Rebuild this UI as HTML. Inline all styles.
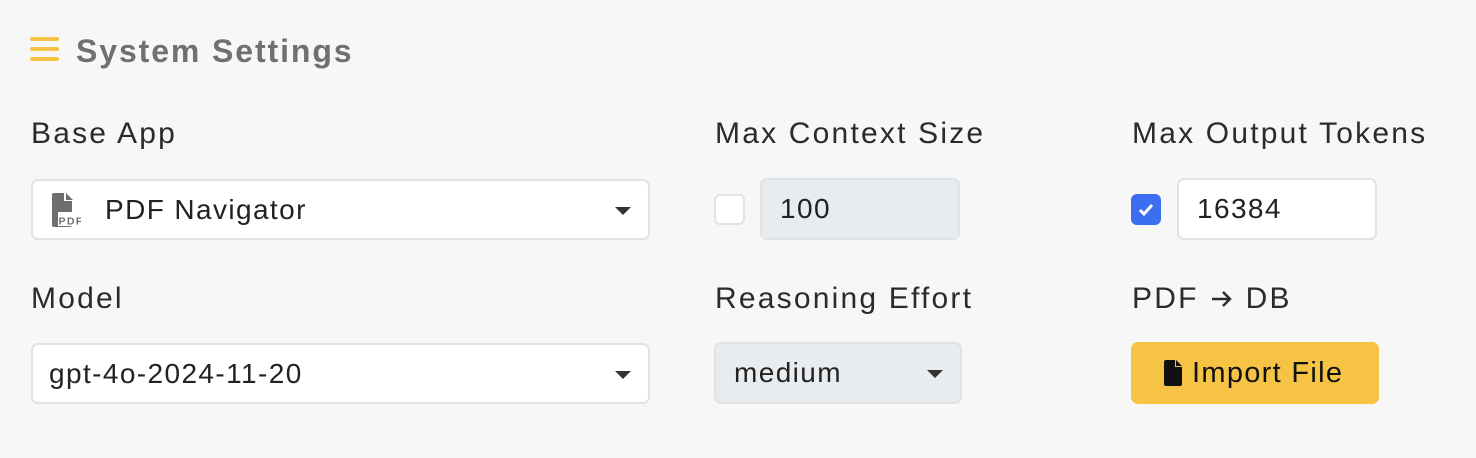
<!DOCTYPE html>
<html><head><meta charset="utf-8"><style>
body{margin:0;width:1476px;height:458px;background:#f7f7f7;font-family:"Liberation Sans",sans-serif;color:#222;position:relative;overflow:hidden}
.a{position:absolute}
.lbl{font-size:30px;letter-spacing:2.2px;color:#2b2b2b;line-height:1}
.box{position:absolute;box-sizing:border-box;border:2px solid #dfe2e6;border-radius:7px;background:#fff;font-size:28px;letter-spacing:1.4px;display:flex;align-items:center}
.caret{position:absolute;right:17px;top:26px;width:0;height:0;border-left:8px solid transparent;border-right:8px solid transparent;border-top:8px solid #333}
</style></head><body>
<svg class="a" style="left:30px;top:37px" width="29" height="26"><rect x="0" y="0" width="29" height="4" rx="2" fill="#f6c344"/><rect x="0" y="10" width="29" height="4" rx="2" fill="#f6c344"/><rect x="0" y="20" width="29" height="4" rx="2" fill="#f6c344"/></svg>
<div class="a" style="left:76px;top:33px;font-size:32px;font-weight:bold;color:#707070;letter-spacing:1.9px">System Settings</div>

<div class="a lbl" style="left:31px;top:119px">Base App</div>
<div class="a lbl" style="left:715px;top:119px">Max Context Size</div>
<div class="a lbl" style="left:1132px;top:119px">Max Output Tokens</div>

<div class="box" style="left:31px;top:179px;width:619px;height:61px">
<svg class="a" style="left:18px;top:12px" width="30" height="34"><path d="M3 0h10v8h8v24a2 2 0 0 1-2 2H3a2 2 0 0 1-2-2V2a2 2 0 0 1 2-2z" fill="#6e6e6e"/><path d="M15 0l7 7h-7z" fill="#6e6e6e"/><rect x="7" y="19" width="23" height="14" fill="#fff"/><text x="7.5" y="31.5" font-size="10.5" font-family="Liberation Sans" font-weight="bold" fill="#6e6e6e">PDF</text></svg>
<span style="margin-left:72px">PDF Navigator</span><div class="caret"></div></div>

<div class="box" style="left:714px;top:194px;width:31px;height:31px;border-radius:6px"></div>
<div class="box" style="left:760px;top:178px;width:200px;height:62px;background:#e9ecef"><span style="margin-left:18px">100</span></div>

<div class="a" style="left:1131px;top:194px;width:30px;height:31px;background:#3b6ff0;border-radius:6px"><svg width="30" height="31"><path d="M9 16l4 4 8-9" stroke="#fff" stroke-width="3" fill="none"/></svg></div>
<div class="box" style="left:1177px;top:178px;width:200px;height:62px"><span style="margin-left:18px">16384</span></div>

<div class="a lbl" style="left:31px;top:284px">Model</div>
<div class="a lbl" style="left:715px;top:284px">Reasoning Effort</div>
<div class="a lbl" style="left:1132px;top:284px">PDF <svg width="26" height="22" style="vertical-align:-1px"><path d="M3 12h18M14 5l7 7-7 7" stroke="#2b2b2b" stroke-width="2.5" fill="none"/></svg> DB</div>

<div class="box" style="left:31px;top:343px;width:619px;height:61px"><span style="margin-left:16px">gpt-4o-2024-11-20</span><div class="caret"></div></div>
<div class="box" style="left:714px;top:342px;width:248px;height:62px;background:#e9ecef"><span style="margin-left:18px">medium</span><div class="caret" style="right:17px"></div></div>
<div class="a" style="left:1131px;top:342px;width:248px;height:62px;background:#f6c344;border-radius:7px;font-size:29px;letter-spacing:1.3px;color:#111;display:flex;align-items:center">
<svg style="margin-left:33px;margin-right:10px" width="18" height="26"><path d="M2 0h9v7h7v17a2 2 0 0 1-2 2H2a2 2 0 0 1-2-2V2a2 2 0 0 1 2-2z" fill="#111"/><path d="M12 0l6 6h-6z" fill="#111"/></svg>Import File</div>
</body></html>
